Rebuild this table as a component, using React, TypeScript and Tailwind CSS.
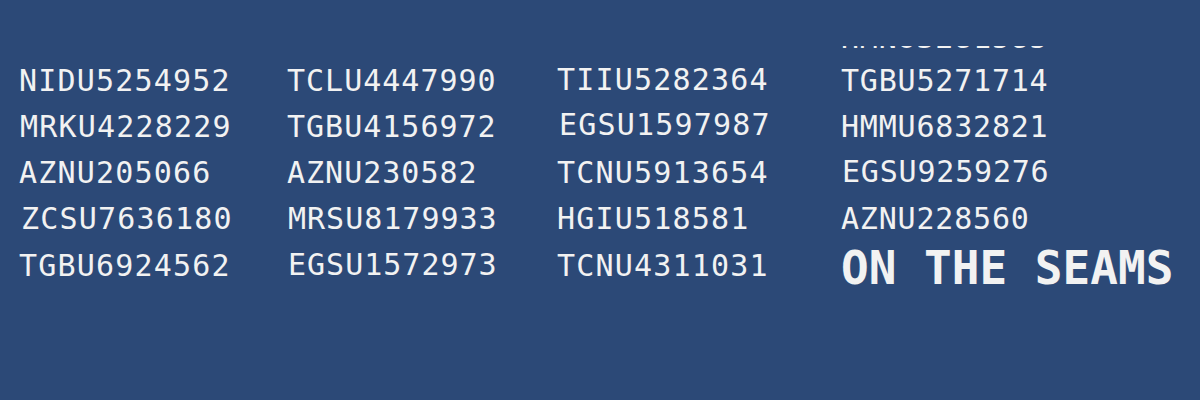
import React from "react";

type Cell = { t: string; c?: string };

const cols: { w: string; tr: string; items: Cell[] }[] = [
  {
    w: "w-[268px]",
    tr: "tracking-[1.2px]",
    items: [
      { t: "NIDU5254952" },
      { t: "MRKU4228229", c: "translate-x-[1px]" },
      { t: "AZNU205066" },
      { t: "ZCSU7636180", c: "translate-x-[2px]" },
      { t: "TGBU6924562" },
    ],
  },
  {
    w: "w-[270px]",
    tr: "tracking-[1px]",
    items: [
      { t: "TCLU4447990" },
      { t: "TGBU4156972" },
      { t: "AZNU230582" },
      { t: "MRSU8179933", c: "translate-x-[1px]" },
      { t: "EGSU1572973", c: "translate-x-[1px] -translate-y-[1px]" },
    ],
  },
  {
    w: "w-[284px]",
    tr: "tracking-[1.2px]",
    items: [
      { t: "TIIU5282364", c: "-translate-y-[1px]" },
      { t: "EGSU1597987", c: "translate-x-[2px] -translate-y-[2px]" },
      { t: "TCNU5913654" },
      { t: "HGIU518581" },
      { t: "TCNU4311031" },
    ],
  },
];

const col4: Cell[] = [
  { t: "TGBU5271714" },
  { t: "HMMU6832821" },
  { t: "EGSU9259276", c: "translate-x-[1px] -translate-y-[1px]" },
  { t: "AZNU228560" },
];

const row = "text-[30px] leading-[46.2px] whitespace-nowrap";

export default function App() {
  return (
    <div
      className="w-[1200px] h-[400px] bg-[#2c4977] text-[#f2f2f2] overflow-hidden"
      style={{ fontFamily: '"DejaVu Sans Mono", monospace' }}
    >
      <div className="flex pl-[19px] pt-[46px]">
        {cols.map((col, i) => (
          <div key={i} className={`${col.w} flex flex-col pt-[11.7px]`}>
            {col.items.map((it, j) => (
              <div key={j} className={`${row} ${col.tr} ${it.c ?? ""}`}>
                {it.t}
              </div>
            ))}
          </div>
        ))}
        <div className="flex flex-col">
          <div className="h-[11.7px] overflow-hidden">
            <div className={`-mt-[31px] ${row} tracking-[0.8px]`}>HMNU3281585</div>
          </div>
          {col4.map((it, j) => (
            <div key={j} className={`${row} tracking-[0.8px] ${it.c ?? ""}`}>
              {it.t}
            </div>
          ))}
          <div className="text-[46px] leading-[50px] font-bold whitespace-nowrap">
            ON THE SEAMS
          </div>
        </div>
      </div>
    </div>
  );
}
